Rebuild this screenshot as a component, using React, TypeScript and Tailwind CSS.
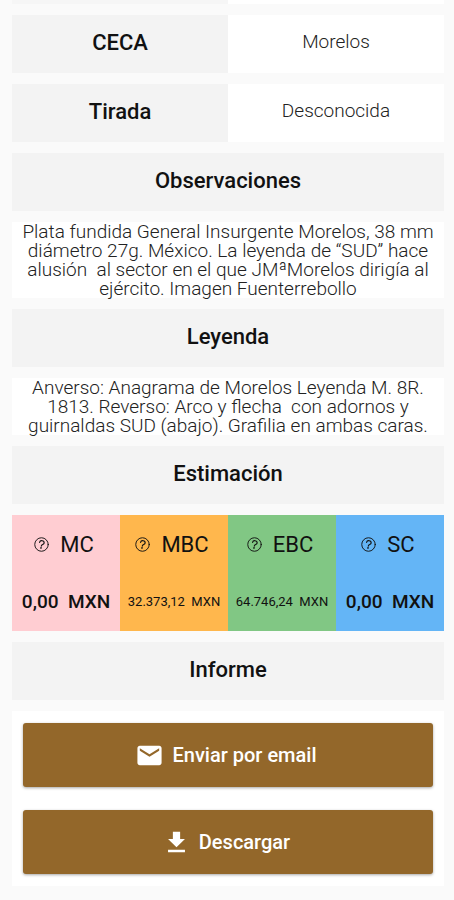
import type { ReactNode } from "react"
import { MdDownload, MdEmail } from "react-icons/md"

const details = [
  { label: "CECA", value: "Morelos" },
  { label: "Tirada", value: "Desconocida" },
]

const grades = [
  { name: "MC", price: "0,00", bg: "bg-[#ffcdd2]", size: "text-[19px] font-medium" },
  { name: "MBC", price: "32.373,12", bg: "bg-[#ffb74d]", size: "text-[13px]" },
  { name: "EBC", price: "64.746,24", bg: "bg-[#81c784]", size: "text-[13px]" },
  { name: "SC", price: "0,00", bg: "bg-[#64b5f6]", size: "text-[19px] font-medium" },
]

function HelpIcon() {
  return (
    <svg viewBox="0 0 24 24" className="size-[15px]" fill="none" stroke="currentColor" strokeLinecap="round">
      <circle cx="12" cy="12" r="10.8" strokeWidth="1.5" />
      <g transform="rotate(10 12 12)">
        <path d="M8.4 9.2C8.5 7 10 5.9 12 5.9s3.7 1.2 3.7 3.1c0 2.9-3.5 2.7-3.6 5.6" strokeWidth="1.8" />
        <circle cx="12" cy="17.6" r="0.6" strokeWidth="1.3" />
      </g>
    </svg>
  )
}

function SectionTitle({ children }: { children: ReactNode }) {
  return (
    <h2 className="flex h-[58px] items-center justify-center bg-[#f3f3f3] pb-1 text-[22px] font-medium">{children}</h2>
  )
}

function SectionText({ children }: { children: ReactNode }) {
  return (
    <p className="bg-white px-2 text-center text-[19px] leading-[19px] font-light whitespace-pre-wrap text-[#222]">
      {children}
    </p>
  )
}

function ActionButton({ icon, children }: { icon: ReactNode; children: ReactNode }) {
  return (
    <button
      type="button"
      className="flex h-16 w-full items-center justify-center gap-2 rounded-[3px] bg-[#93672a] pr-1 text-xl font-medium text-white shadow-[0_1px_3px_rgba(0,0,0,0.35)]"
    >
      {icon}
      {children}
    </button>
  )
}

export default function App() {
  return (
    <main className="flex min-h-screen flex-col gap-[11px] bg-[#fafafa] pr-[10px] pb-3 pl-3 font-['Roboto',sans-serif] text-[#111]">
      {/* tail of the row scrolled off the top */}
      <div className="grid h-1 grid-cols-2">
        <div className="bg-[#f6f6f6]" />
        <div className="bg-white" />
      </div>

      <dl className="flex flex-col gap-[11px]">
        {details.map((item) => (
          <div key={item.label} className="grid h-[58px] grid-cols-2 text-center">
            <dt className="flex items-center justify-center bg-[#f3f3f3] pb-1 text-[22px] font-medium">{item.label}</dt>
            <dd className="flex items-center justify-center bg-white pb-1 text-[19px] font-light text-[#222]">
              {item.value}
            </dd>
          </div>
        ))}
      </dl>

      <SectionTitle>Observaciones</SectionTitle>
      <SectionText>
        {
          "Plata fundida General Insurgente Morelos, 38 mm diámetro 27g. México. La leyenda de “SUD” hace alusión  al sector en el que JMªMorelos dirigía al ejército. Imagen Fuenterrebollo"
        }
      </SectionText>

      <SectionTitle>Leyenda</SectionTitle>
      <SectionText>
        {
          "Anverso: Anagrama de Morelos Leyenda M. 8R. 1813. Reverso: Arco y flecha  con adornos y guirnaldas SUD (abajo). Grafilia en ambas caras."
        }
      </SectionText>

      <SectionTitle>Estimación</SectionTitle>
      <table className="w-full table-fixed">
        <thead>
          <tr className="h-[58px]">
            {grades.map((grade) => (
              <th key={grade.name} scope="col" className={`p-0 font-normal ${grade.bg}`}>
                <div className="flex items-center justify-center gap-[11px] pr-1 text-[22px]">
                  <button type="button" aria-label={`Ayuda ${grade.name}`}>
                    <HelpIcon />
                  </button>
                  {grade.name}
                </div>
              </th>
            ))}
          </tr>
        </thead>
        <tbody>
          <tr className="h-[58px]">
            {grades.map((grade) => (
              <td key={grade.name} className={`p-0 text-center whitespace-pre ${grade.bg} ${grade.size}`}>
                {`${grade.price}  MXN`}
              </td>
            ))}
          </tr>
        </tbody>
      </table>

      <SectionTitle>Informe</SectionTitle>
      <div className="flex flex-col gap-[23px] bg-white px-[11px] py-3">
        <ActionButton icon={<MdEmail size={29} />}>Enviar por email</ActionButton>
        <ActionButton icon={<MdDownload size={29} />}>Descargar</ActionButton>
      </div>
    </main>
  )
}
